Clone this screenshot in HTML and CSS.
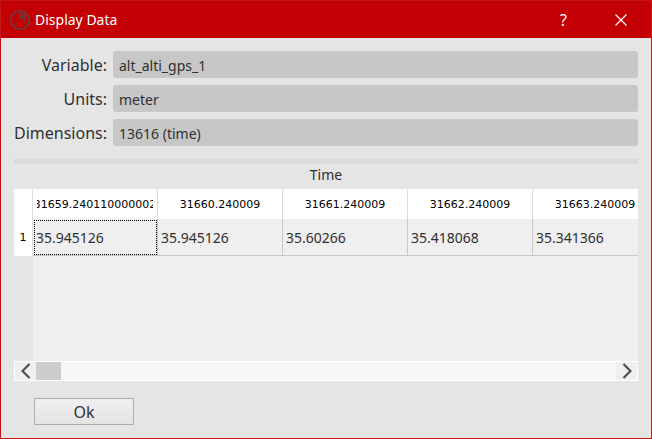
FILE: index.html
```html
<!DOCTYPE html>
<html lang="en">
<head>
<meta charset="utf-8">
<title>Display Data</title>
<link rel="stylesheet" href="styles.css">
</head>
<body>
<main class="dialog">
  <header class="titlebar">
    <svg class="logo" viewBox="0 0 20 20" aria-hidden="true">
      <circle cx="10" cy="10" r="9.2" stroke-width="1.5"/>
      <circle cx="12" cy="5.500" r="2.600" stroke-width="1"/>
      <path d="M8 3l3 3-2 2M16 3l-5 5M12 8l4 4.500M14 7l1 4M14 3l2 4" stroke-width="1"/>
      <path d="M4 8h2M7 9h2M4 11h1M8 11h1M5 14h2M9 14h1M12 14h2M7 16h1M11 16h1" stroke-width="1" opacity=".45"/>
    </svg>
    <h1 class="title">Display Data</h1>
    <button class="window-button" type="button" aria-label="Help">?</button>
    <button class="window-button" type="button" aria-label="Close">
      <svg class="close" viewBox="0 0 12 12" aria-hidden="true"><path d="M.5.5l11 11M11.500.5l-11 11"/></svg>
    </button>
  </header>
  <div class="content">
    <form class="fields">
      <label for="variable">Variable:</label>
      <input id="variable" type="text" value="alt_alti_gps_1" readonly>
      <label for="units">Units:</label>
      <input id="units" type="text" value="meter" readonly>
      <label for="dimensions">Dimensions:</label>
      <input id="dimensions" type="text" value="13616 (time)" readonly>
    </form>
    <div class="separator"></div>
    <h2 class="axis">Time</h2>
    <div class="grid">
      <div class="viewport">
        <table class="data">
          <colgroup><col class="index-col"><col class="value-col"><col class="value-col"><col class="value-col"><col class="value-col"><col class="value-col"></colgroup>
          <thead>
            <tr>
              <td class="corner"></td>
              <th scope="col"><div class="clip"><span>31659.240110000002</span></div></th>
              <th scope="col"><div class="clip"><span>31660.240009</span></div></th>
              <th scope="col"><div class="clip"><span>31661.240009</span></div></th>
              <th scope="col"><div class="clip"><span>31662.240009</span></div></th>
              <th scope="col"><div class="clip"><span>31663.240009</span></div></th>
            </tr>
          </thead>
          <tbody>
            <tr>
              <th scope="row">1</th>
              <td class="current">35.945126</td>
              <td>35.945126</td>
              <td>35.60266</td>
              <td>35.418068</td>
              <td>35.341366</td>
            </tr>
          </tbody>
        </table>
      </div>
      <div class="scrollbar">
        <button class="arrow" type="button" aria-label="Scroll left">
          <svg viewBox="0 0 10 16" aria-hidden="true"><path d="M8.500 1L1.500 8l7 7"/></svg>
        </button>
        <div class="track"><div class="thumb"></div></div>
        <button class="arrow" type="button" aria-label="Scroll right">
          <svg viewBox="0 0 10 16" aria-hidden="true"><path d="M1.500 1l7 7-7 7"/></svg>
        </button>
      </div>
    </div>
    <footer class="actions"><button class="ok" type="button">Ok</button></footer>
  </div>
</main>
</body>
</html>
```
FILE: styles.css
```css
* {
  box-sizing: border-box;
}

body {
  margin: 0;
  font-family: "Noto Sans", "Open Sans", sans-serif;
  color: #303030;
}

button {
  font: inherit;
  color: inherit;
  padding: 0;
}

.dialog {
  display: flex;
  flex-direction: column;
  min-height: 100vh;
  border: 1px solid #c4161a;
  background: #e5e5e5;
}

.titlebar {
  display: flex;
  align-items: center;
  height: 37px;
  padding-left: 9px;
  padding-right: 2px;
  background: #c30003;
  color: #fff;
}

.logo {
  width: 20px;
  height: 20px;
  fill: none;
  stroke: #684044;
}

.title {
  flex: 1;
  margin: 0 0 0 5px;
  font-size: 14px;
  font-weight: 400;
}

.window-button {
  display: flex;
  align-items: center;
  justify-content: center;
  width: 57px;
  height: 36px;
  border: 0;
  background: none;
  font-size: 16px;
  line-height: 20px;
}

.close {
  width: 12px;
  height: 12px;
  fill: none;
  stroke: #fff;
  stroke-width: 1.2;
}

.content {
  flex: 1;
  display: flex;
  flex-direction: column;
  padding: 13px;
}

.fields {
  display: grid;
  grid-template-columns: auto 1fr;
  gap: 7px 6px;
  align-items: center;
}

.fields label {
  padding-top: 2px;
  font-size: 16px;
  line-height: 25px;
  text-align: right;
}

.fields input {
  width: 100%;
  min-width: 0;
  height: 27px;
  padding: 2px 6px 0;
  border: 0;
  border-radius: 3px;
  background: #c7c7c7;
  color: #303030;
  font-family: inherit;
  font-size: 14px;
}

.separator {
  height: 5px;
  margin-top: 13px;
  background: #dbdbdb;
}

.axis {
  margin: 0;
  font-size: 14px;
  font-weight: 400;
  line-height: 22px;
  padding-bottom: 3px;
  text-align: center;
}

.grid {
  flex: 1;
  display: flex;
  flex-direction: column;
}

.viewport {
  flex: 1;
  overflow: hidden;
  background: linear-gradient(to right, #e5e5e5 19px, #efefef 19px);
}

.data {
  width: 644px;
  table-layout: fixed;
  border-collapse: separate;
  border-spacing: 0;
}

.index-col {
  width: 19px;
}

.value-col {
  width: 125px;
}

.data th {
  padding: 0;
  background: #fff;
  color: #000;
  font-family: "DejaVu Sans", sans-serif;
  font-size: 11px;
  font-weight: 400;
}

.data thead th {
  height: 30px;
  border-right: 1px solid #dcdcdc;
}

.data .corner {
  height: 30px;
  padding: 0;
  border: 0;
  border-right: 1px solid #dcdcdc;
  background: #fff;
}

.clip {
  display: flex;
  justify-content: center;
  margin: 0 4px;
  overflow: hidden;
}

.data tbody th {
  border-right: 1px solid #dcdcdc;
}

.data td {
  height: 37px;
  padding: 0 3px;
  border-right: 1px solid #c8c8c8;
  border-bottom: 1px solid #c8c8c8;
  font-size: 14px;
}

.data .current {
  outline: 1px dotted #000;
  outline-offset: -2px;
}

.scrollbar {
  display: flex;
  height: 20px;
  border: 1px solid #fff;
  background: #efefef;
}

.arrow {
  display: flex;
  align-items: center;
  justify-content: center;
  width: 21px;
  border: 0;
  background: #efefef;
}

.arrow svg {
  width: 10px;
  height: 16px;
  fill: none;
  stroke: #505050;
  stroke-width: 2.2;
}

.track {
  flex: 1;
  background: repeating-conic-gradient(#fff 0 25%, #efefef 0 50%) 0 0 / 2px 2px;
}

.thumb {
  width: 25px;
  height: 100%;
  background: #cdcdcd;
}

.actions {
  padding: 17px 20px 0;
}

.ok {
  display: block;
  width: 100px;
  height: 27px;
  border: 1px solid #adadad;
  background: linear-gradient(#f0f0f0, #e3e3e3);
  font-size: 16px;
  line-height: 24px;
}
```
